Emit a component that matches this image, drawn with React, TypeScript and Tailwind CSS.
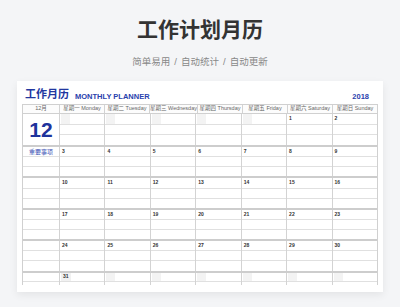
import type { ReactNode } from 'react';

type Cell = number | null;

const dayNames: [string, string][] = [
  ['星期一', 'Monday'],
  ['星期二', 'Tuesday'],
  ['星期三', 'Wednesday'],
  ['星期四', 'Thursday'],
  ['星期五', 'Friday'],
  ['星期六', 'Saturday'],
  ['星期日', 'Sunday'],
];

const weeks: Cell[][] = [
  [null, null, null, null, null, 1, 2],
  [3, 4, 5, 6, 7, 8, 9],
  [10, 11, 12, 13, 14, 15, 16],
  [17, 18, 19, 20, 21, 22, 23],
  [24, 25, 26, 27, 28, 29, 30],
  [31, null, null, null, null, null, null],
];

const weekRowClass = [
  'flex h-[31px]',
  'flex h-[31.4px] border-t-2 border-[#cdcdcd]',
  'flex h-[31.4px] border-t-2 border-[#cdcdcd]',
  'flex h-[31.4px] border-t-2 border-[#cdcdcd]',
  'flex h-[31.4px] border-t-2 border-[#cdcdcd]',
  'flex h-[14px] border-t-2 border-[#cdcdcd]',
];

function subRowClasses(week: number): string[] {
  if (week === 5) {
    return ['h-[9px] border-b border-[#e0e0e0] flex', 'flex-1'];
  }
  return ['flex-1 border-b border-[#e0e0e0] flex', 'flex-1 border-b border-[#e0e0e0]', 'flex-1'];
}

function DateMark({ n }: { n: Cell }) {
  if (n === null) {
    return <span className="ml-[1px] h-full w-[9px] bg-[#f3f3f3]" />;
  }
  if (n === 31) {
    return (
      <span className="ml-[1px] flex h-full items-center bg-[#f1f1f1] px-[2px] text-[5px] font-bold leading-none text-[#333]">
        {n}
      </span>
    );
  }
  return <span className="pl-[2px] pt-[2px] text-[5px] font-bold leading-none text-[#333]">{n}</span>;
}

function DayColumn({ n, week }: { n: Cell; week: number }) {
  const rows = subRowClasses(week);
  return (
    <div className="flex flex-1 flex-col border-l border-[#d3d3d3]">
      {rows.map((cls, i) => (
        <div key={i} className={cls}>
          {i === 0 ? <DateMark n={n} /> : null}
        </div>
      ))}
    </div>
  );
}

function FirstColumn({ week }: { week: number }) {
  if (week === 0) {
    return (
      <div className="flex w-[36px] items-center justify-center">
        <span className="text-[21px] font-bold leading-none text-[#1e339c]">12</span>
      </div>
    );
  }
  const rows = subRowClasses(week);
  return (
    <div className="flex w-[36px] flex-col">
      {rows.map((cls, i) => {
        let content: ReactNode = null;
        if (week === 1 && i === 0) {
          content = (
            <span className="flex w-full items-center justify-center text-[6px] leading-none text-[#3e53b6]">
              重要事项
            </span>
          );
        }
        return (
          <div key={i} className={cls}>
            {content}
          </div>
        );
      })}
    </div>
  );
}

export default function App() {
  return (
    <div className="h-[307px] w-[400px] overflow-hidden bg-[#f4f5f7] font-['Liberation_Sans','Noto_Sans_CJK_SC',sans-serif]">
      <div className="pt-[18px] text-center text-[21px] font-bold leading-[24px] text-[#333]">工作计划月历</div>
      <div className="mt-[13px] flex items-center justify-center gap-[4px] text-[9.5px] leading-[14px] text-[#888]">
        <span>简单易用</span>
        <span>/</span>
        <span>自动统计</span>
        <span>/</span>
        <span>自动更新</span>
      </div>

      <div className="mx-[17px] mt-[12px] bg-white px-[5px] pb-[7px] shadow-[0_3px_8px_rgba(0,0,0,0.07)]">
        <div className="flex h-[23px] items-end pb-[4px] pl-[3px]">
          <span className="text-[11px] font-bold leading-none text-[#22379f]">工作月历</span>
          <span className="ml-[6px] text-[7.5px] font-bold leading-none text-[#2a42ad]">MONTHLY PLANNER</span>
          <span className="ml-auto mr-[9px] text-[7.5px] font-bold leading-none text-[#2a42ad]">2018</span>
        </div>

        <div className="border-x border-[#d0d0d0]">
          <div className="flex h-[10px] border-y border-[#d0d0d0] bg-[#fcfcfc]">
            <div className="flex w-[36px] items-center justify-center text-[5.5px] leading-none text-[#666]">12月</div>
            {dayNames.map(([zh, en]) => (
              <div
                key={en}
                className="flex flex-1 items-center justify-center border-l border-[#d3d3d3] text-[5.5px] leading-none whitespace-nowrap text-[#666]"
              >
                {zh} {en}
              </div>
            ))}
          </div>

          {weeks.map((days, w) => (
            <div key={w} className={weekRowClass[w]}>
              <FirstColumn week={w} />
              {days.map((n, d) => (
                <DayColumn key={d} n={n} week={w} />
              ))}
            </div>
          ))}
        </div>
      </div>
    </div>
  );
}
